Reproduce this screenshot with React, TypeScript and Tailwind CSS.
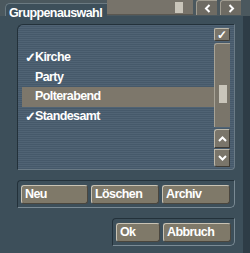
import React from "react";

const items = [
  { label: "Kirche", checked: true, active: false },
  { label: "Party", checked: false, active: false },
  { label: "Polterabend", checked: false, active: true },
  { label: "Standesamt", checked: true, active: false },
];

function Btn({ label, w }: { label: string; w: string }) {
  return (
    <div
      className={`${w} h-[19px] rounded-[3px] border border-t-[#c9c3b4] border-l-[#c9c3b4] border-r-[#4a463e] border-b-[#4a463e] bg-[#7f7969] pl-[3px] text-[12.5px] leading-[17px] font-bold tracking-[-0.6px] text-white`}
    >
      {label}
    </div>
  );
}

function Chevron({ dir }: { dir: "left" | "right" }) {
  return (
    <svg width="7" height="9" viewBox="0 0 7 9">
      <path
        d={dir === "left" ? "M5.5 1 L2 4.5 L5.5 8" : "M1.5 1 L5 4.5 L1.5 8"}
        stroke="white"
        strokeWidth="2"
        fill="none"
      />
    </svg>
  );
}

export default function App() {
  return (
    <div
      className="w-[250px] h-[253px] bg-[#2e3c46] flex flex-col overflow-hidden"
      style={{ fontFamily: '"Liberation Sans", Arial, sans-serif' }}
    >
      {/* title strip */}
      <div className="h-[16px] flex bg-[#4b585e] shrink-0">
        <div className="relative z-10 ml-[5px] mt-[3px] w-[102px] h-[13px] rounded-tl-[5px] bg-[#3d4f5a] border-l border-t border-[#6b7a82] pl-[3px] text-[12.5px] leading-[18px] font-bold tracking-[-0.6px] text-white whitespace-nowrap">
          Gruppenauswahl
        </div>
        <div className="w-[86px] h-[15px] bg-[#77736a] border-b border-[#5a5750] flex items-center justify-end pr-[10px]">
          <div className="w-[8px] h-[11px] bg-[#c9c5ba]" />
        </div>
        <div className="ml-[3px] w-[21px] h-[15px] rounded-tl-[3px] bg-[#6e6b63] border-l border-t border-[#a09c90] flex items-center justify-center">
          <Chevron dir="left" />
        </div>
        <div className="ml-[3px] w-[21px] h-[15px] rounded-tl-[3px] bg-[#6e6b63] border-l border-t border-[#a09c90] flex items-center justify-center">
          <Chevron dir="right" />
        </div>
      </div>

      {/* main panel */}
      <div className="w-[243px] flex-1 bg-[#3d4f5a] flex flex-col">
        {/* list box */}
        <div className="ml-[17px] mt-[8px] w-[218px] h-[146px] rounded-tl-[6px] rounded-br-[4px] border border-t-[#23313a] border-l-[#23313a] border-r-[#6b7b86] border-b-[#6b7b86] bg-[repeating-linear-gradient(to_bottom,#506374_0px,#506374_1px,#46596a_1px,#46596a_2px)] flex">
          <div className="flex-1 pt-[23px] pl-[4px]">
            {items.map((it) => (
              <div
                key={it.label}
                className={`h-[19.5px] flex items-center text-[12.5px] font-bold tracking-[-0.6px] text-white ${it.active ? "bg-[#7d776b]" : ""}`}
              >
                <span className="w-[13px] pl-[3px] shrink-0 text-[13px]">{it.checked ? "✓" : ""}</span>
                <span>{it.label}</span>
              </div>
            ))}
          </div>
          {/* scrollbar */}
          <div className="w-[16px] mr-[4px] pt-[3px] flex flex-col">
            <div className="h-[13px] rounded-[2px] bg-[#7a756a] border border-t-[#bdb8aa] border-l-[#bdb8aa] border-r-[#3e3b35] border-b-[#3e3b35] flex items-center justify-center text-white text-[12px] font-bold leading-none">
              ✓
            </div>
            <div className="mt-[2px] h-[84px] rounded-tl-[3px] bg-[#7a756a] border-l border-t border-[#a8a396] flex flex-col items-center pt-[41px]">
              <div className="w-[8px] h-[18px] bg-[#c9c5ba]" />
            </div>
            <div className="mt-[2px] h-[19px] rounded-tl-[3px] bg-[#7a756a] border border-t-[#bdb8aa] border-l-[#bdb8aa] border-r-[#3e3b35] border-b-[#3e3b35] flex items-center justify-center">
              <svg width="9" height="6" viewBox="0 0 9 6">
                <path d="M1 5 L4.5 1.5 L8 5" stroke="white" strokeWidth="2" fill="none" />
              </svg>
            </div>
            <div className="mt-[1px] h-[18px] rounded-bl-[3px] bg-[#7a756a] border border-t-[#bdb8aa] border-l-[#bdb8aa] border-r-[#3e3b35] border-b-[#3e3b35] flex items-center justify-center">
              <svg width="9" height="6" viewBox="0 0 9 6">
                <path d="M1 1 L4.5 4.5 L8 1" stroke="white" strokeWidth="2" fill="none" />
              </svg>
            </div>
          </div>
        </div>

        {/* button row 1 */}
        <div className="ml-[17px] mt-[10px] w-[218px] h-[28px] rounded-tl-[4px] rounded-br-[5px] border border-t-[#23313a] border-l-[#23313a] border-r-[#7a8a94] border-b-[#7a8a94] flex items-center gap-[3px] pl-[3px]">
          <Btn label="Neu" w="w-[67px]" />
          <Btn label="Löschen" w="w-[68px]" />
          <Btn label="Archiv" w="w-[68px]" />
        </div>

        {/* button row 2 */}
        <div className="ml-[112px] mt-[10px] w-[123px] h-[28px] rounded-tl-[4px] rounded-br-[5px] border border-t-[#23313a] border-l-[#23313a] border-r-[#7a8a94] border-b-[#7a8a94] flex items-center gap-[3px] pl-[3px]">
          <Btn label="Ok" w="w-[44px]" />
          <Btn label="Abbruch" w="w-[68px]" />
        </div>
      </div>
    </div>
  );
}
